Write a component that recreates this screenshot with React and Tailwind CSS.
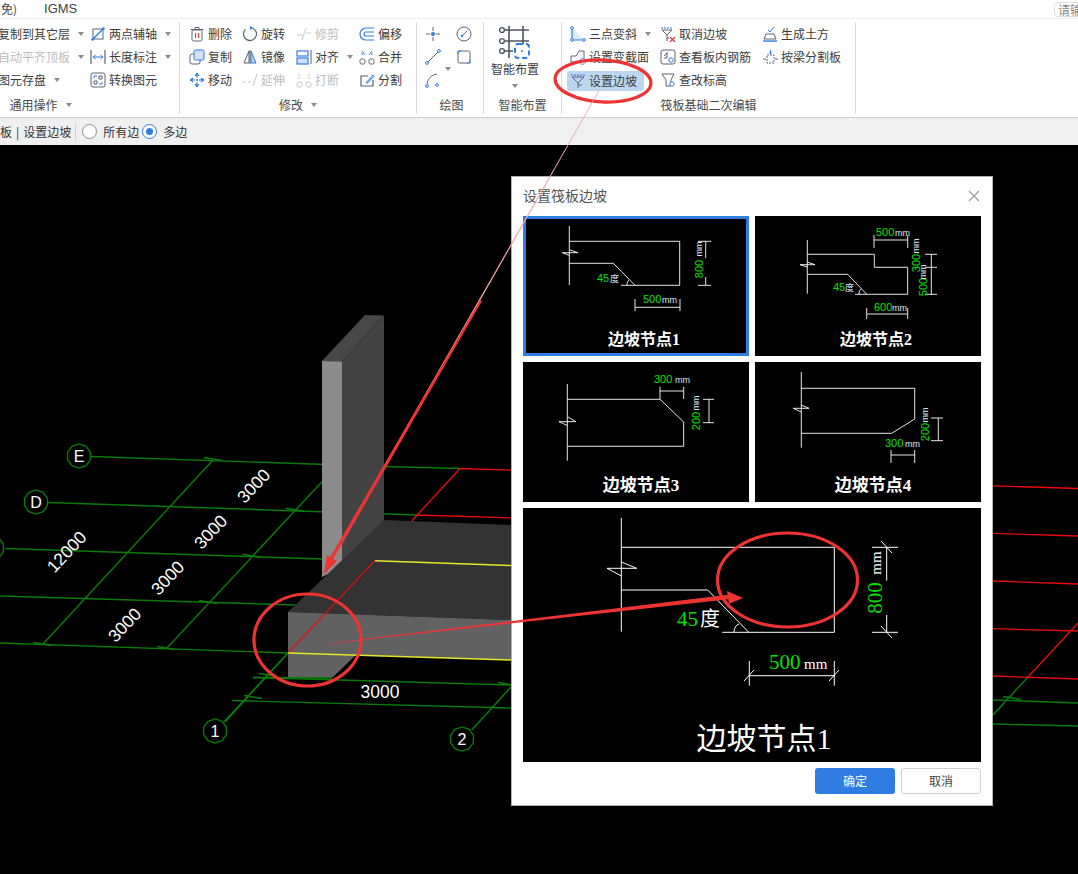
const BLUE = "#2f7de1";
const DARK = "#5a6372";
const OFF = "#c4c4c4";
const GREEN = "#087c08";

// ribbon icons, all in a 16x16 box
const icons = {
  axis: <><rect x="3" y="3" width="10" height="10" fill="none" stroke={DARK} /><path d="M2 14L14 2" stroke={BLUE} strokeWidth="1.4" /><circle cx="2.5" cy="13.5" r="1.2" fill={BLUE} /><circle cx="13.5" cy="2.5" r="1.2" fill={BLUE} /></>,
  length: <><path d="M1 1V15M15 1V15" stroke={DARK} strokeWidth="1.2" /><path d="M3 8H13M3 8l2.5-2M3 8l2.5 2M13 8l-2.5-2M13 8l-2.5 2" stroke={BLUE} fill="none" /></>,
  convert: <><rect x="1" y="1" width="14" height="14" rx="2" fill="none" stroke={DARK} /><path d="M4 6V4h3M12 10v2H9" fill="none" stroke={BLUE} /><path d="M9 4h3v3H9zM4 9h3v3H4z" fill="none" stroke={DARK} /></>,
  trash: <><rect x="3" y="4" width="10" height="11" rx="1.5" fill="none" stroke={DARK} /><path d="M1.5 3.5H14.5M6 3.5V1.5H10V3.5" fill="none" stroke={DARK} /><path d="M6.5 7V12M9.5 7V12" stroke="#e23b3b" strokeWidth="1.2" /></>,
  rotate: <><path d="M8 1.5A6.5 6.5 0 1 1 3.4 3.4" fill="none" stroke={DARK} strokeWidth="1.2" /><path d="M8 0L11 2L8 4Z" fill={BLUE} /></>,
  trim: <path d="M1 9H6M10 7H15M10 2L6 14" stroke={OFF} fill="none" />,
  offset: <path d="M15 2H7A6 6 0 0 0 7 14H15M15 6H7A2 2 0 0 0 7 10H15" fill="none" stroke={BLUE} strokeWidth="1.2" />,
  copy: <><rect x="1" y="5" width="10" height="10" rx="2" fill="#fff" stroke={DARK} /><rect x="5" y="1" width="10" height="10" rx="1.5" fill="#cfe0f7" stroke={BLUE} /></>,
  mirror: <><path d="M7 2L2 14H7Z" fill="none" stroke={DARK} /><path d="M9 2L14 14H9Z" fill="#b8d2f3" stroke={BLUE} /><path d="M8 1V15" stroke={DARK} /></>,
  align: <><rect x="1" y="2" width="11" height="5" fill="none" stroke={BLUE} strokeWidth="1.2" /><rect x="1" y="9" width="11" height="6" fill="#cfe0f7" stroke={BLUE} strokeWidth="1.2" /><path d="M15 1V15" stroke={DARK} /></>,
  merge: <><rect x="1" y="10" width="5" height="5" rx="1.5" fill="none" stroke={DARK} /><rect x="10" y="10" width="5" height="5" rx="1.5" fill="none" stroke={DARK} /><path d="M3 2L6 6M3 6V4M13 2L10 6M13 6V4" stroke={BLUE} fill="none" /></>,
  move: <path d="M8 1V15M1 8H15M8 1L6 3.5H10ZM8 15L6 12.5H10ZM1 8L3.5 6V10ZM15 8L12.5 6V10Z" fill={BLUE} stroke={BLUE} strokeDasharray="2 1" />,
  extend: <path d="M1 10H4M6 10H9M15 2L11 14" stroke={OFF} fill="none" />,
  broken: <><rect x="1" y="10" width="5" height="5" rx="1.5" fill="none" stroke={OFF} /><rect x="10" y="10" width="5" height="5" rx="1.5" fill="none" stroke={OFF} /><path d="M3 2L3 7M13 2L13 7" stroke={OFF} strokeDasharray="2 1" /></>,
  split: <><path d="M9 4H2V14H14V8" fill="none" stroke={DARK} strokeWidth="1.2" /><path d="M7 11L14 3L15 4.5L8.5 11Z" fill="#cfe0f7" stroke={BLUE} /></>,
  point: <><path d="M8 1V5M8 11V15M1 8H5M11 8H15" stroke={DARK} /><circle cx="8" cy="8" r="2" fill={BLUE} /></>,
  arc2: <><circle cx="8" cy="8" r="7" fill="none" stroke={DARK} /><path d="M6 10L11 5" stroke={BLUE} /><circle cx="6" cy="10" r="1.2" fill={BLUE} /></>,
  line: <><path d="M2 14L14 2" stroke={DARK} /><circle cx="2" cy="14" r="1.4" fill="#fff" stroke={BLUE} /><circle cx="14" cy="2" r="1.4" fill="#fff" stroke={BLUE} /></>,
  square: <><rect x="2" y="2" width="12" height="12" rx="1.5" fill="none" stroke={DARK} /><path d="M2 5V2H5M14 11V14H11" fill="none" stroke={BLUE} /></>,
  curve: <><path d="M2 14C2 7 6 3 12 2" fill="none" stroke={DARK} /><circle cx="2" cy="14" r="1.4" fill="#fff" stroke={BLUE} /><circle cx="12" cy="13" r="1.4" fill="#fff" stroke={BLUE} /></>,
  threePoint: <><path d="M2 2V14H14Z" fill="#dce9f8" stroke="none" /><path d="M2 2V14H14" fill="none" stroke={BLUE} strokeWidth="1.2" /><circle cx="2" cy="2" r="1.4" fill="#fff" stroke={BLUE} /><circle cx="2" cy="14" r="1.4" fill="#fff" stroke={BLUE} /><circle cx="14" cy="14" r="1.4" fill="#fff" stroke={BLUE} /></>,
  section: <><path d="M1 13V7L6 7L9 2H14V11" fill="none" stroke={DARK} /><path d="M1 13H9" stroke={DARK} /><circle cx="12.5" cy="12.5" r="3" fill="#cfe0f7" stroke={BLUE} strokeDasharray="1.5 1" /></>,
  slope: <><path d="M1 2H15" stroke={BLUE} strokeDasharray="2 1" /><path d="M2 4L8 10L14 4H2ZM8 10V15M8 12H12" fill="none" stroke={DARK} /></>,
  cancelSlope: <><path d="M1 2H13" stroke={BLUE} strokeDasharray="2 1" /><path d="M2 4L7 9L12 4H2ZM7 9V15M7 12H9" fill="none" stroke={DARK} /><path d="M10 11L15 16M15 11L10 16" stroke="#e23b3b" strokeWidth="1.3" /></>,
  rebar: <><rect x="1" y="1" width="14" height="14" rx="2" fill="none" stroke={DARK} /><path d="M7 3V9H4M4 7L7 4" fill="none" stroke={DARK} /><circle cx="11" cy="11" r="2.2" fill="none" stroke={BLUE} /></>,
  elevation: <><path d="M2 2H14L11 8V14H6V8Z" fill="none" stroke={DARK} /><circle cx="12" cy="12" r="2.2" fill="#fff" stroke={BLUE} /></>,
  earth: <><path d="M4 8H12L14 13H2Z" fill="none" stroke={DARK} /><path d="M1 15H15" stroke={BLUE} strokeWidth="1.4" /><path d="M6 4L8 6L12 1" fill="none" stroke={BLUE} /></>,
  beamCut: <><rect x="5" y="6" width="7" height="8" fill="none" stroke={DARK} strokeDasharray="2 1" /><path d="M1 10H4M13 10H16" stroke={DARK} /><path d="M8.5 1V5M7 3.5L8.5 5L10 3.5" fill="none" stroke={BLUE} /></>,
};

const Icon = ({ name }) => (
  <svg viewBox="0 0 16 16" className="w-4 h-4 shrink-0">{icons[name]}</svg>
);

const Caret = () => (
  <span className="ml-2 w-0 h-0 border-x-[3px] border-t-[4px] border-x-transparent border-t-[#8a8a8a]" />
);

const Tool = ({ icon, label, caret, off, active }) => (
  <div className={`flex items-center ${active ? "bg-[#bcd6f0] rounded-[3px] -ml-[3px] pl-[3px] h-[20px] mt-[3px] w-[77px]" : "h-[23px]"}`}>
    {icon && <Icon name={icon} />}
    {label && <span className={`whitespace-nowrap ${icon ? "ml-[3px]" : ""} ${off ? "text-[#bdbdbd]" : "text-[#3c3c3c]"}`}>{label}</span>}
    {caret && <Caret />}
  </div>
);

const Group = ({ label, caret, className, children }) => (
  <div className={`flex flex-col h-[92px] border-r border-[#dcdcdc] shrink-0 ${className}`}>
    <div className="h-[69px]">{children}</div>
    <div className="mt-[5px] h-[18px] flex items-center justify-center text-[#4a4a4a]">
      {label}
      {caret && <Caret />}
    </div>
  </div>
);

const Ribbon = () => (
  <div className="flex items-start h-[99px] pt-[3px] border-b border-[#d2d2d2] bg-white text-[12px] leading-none">
    <Group label={<span className="ml-[6px]">通用操作</span>} caret className="w-[284px] -ml-[104px]">
      <div className="grid grid-cols-[92px_auto] grid-rows-3 pl-[102px]">
        <Tool label="复制到其它层" caret />
        <Tool icon="axis" label="两点辅轴" caret />
        <Tool label="自动平齐顶板" caret off />
        <Tool icon="length" label="长度标注" caret />
        <Tool label="图元存盘" caret />
        <Tool icon="convert" label="转换图元" />
      </div>
    </Group>
    <Group label="修改" caret className="w-[237px]">
      <div className="grid grid-cols-[53px_54px_63px_auto] grid-rows-3 pl-[9px]">
        <Tool icon="trash" label="删除" />
        <Tool icon="rotate" label="旋转" />
        <Tool icon="trim" label="修剪" off />
        <Tool icon="offset" label="偏移" />
        <Tool icon="copy" label="复制" />
        <Tool icon="mirror" label="镜像" />
        <Tool icon="align" label="对齐" caret />
        <Tool icon="merge" label="合并" />
        <Tool icon="move" label="移动" />
        <Tool icon="extend" label="延伸" off />
        <Tool icon="broken" label="打断" off />
        <Tool icon="split" label="分割" />
      </div>
    </Group>
    <Group label={<span className="ml-[3px]">绘图</span>} className="w-[67px]">
      <div className="grid grid-cols-[31px_auto] grid-rows-3 pl-[8px]">
        <Tool icon="point" />
        <Tool icon="arc2" />
        <Tool icon="line" />
        <Tool icon="square" />
        <div className="flex items-center h-[23px]"><Icon name="curve" /><span className="-ml-1"><Caret /></span></div>
      </div>
    </Group>
    <Group label="智能布置" className="w-[78px]">
      <div className="flex flex-col items-center w-[62px]">
        <svg viewBox="0 0 32 36" className="w-8 h-9 mt-[2px] shrink-0">
          <path d="M2 6H30M2 17H30M2 27H14M10 2V34M24 2V20" stroke="#4d5563" strokeWidth="1.6" fill="none" />
          <circle cx="3" cy="6" r="2.4" fill="#fff" stroke="#4d5563" strokeWidth="1.4" />
          <circle cx="3" cy="17" r="2.4" fill="#fff" stroke="#4d5563" strokeWidth="1.4" />
          <circle cx="3" cy="27" r="2.4" fill="#fff" stroke="#4d5563" strokeWidth="1.4" />
          <rect x="16" y="20" width="14" height="14" rx="3" fill="#fff" stroke={BLUE} strokeWidth="2" strokeDasharray="5 3" />
          <circle cx="23" cy="27" r="1" fill={BLUE} />
        </svg>
        <span className="mt-[3px] whitespace-nowrap text-[#3c3c3c]">智能布置</span>
        <span className="mt-[9px] w-0 h-0 border-x-[3px] border-t-[4px] border-x-transparent border-t-[#8a8a8a]" />
      </div>
    </Group>
    <Group label="筏板基础二次编辑" className="w-[294px]">
      <div className="grid grid-cols-[90px_102px_auto] grid-rows-3 pl-[8px]">
        <Tool icon="threePoint" label="三点变斜" caret />
        <Tool icon="cancelSlope" label="取消边坡" />
        <Tool icon="earth" label="生成土方" />
        <Tool icon="section" label="设置变截面" />
        <Tool icon="rebar" label="查看板内钢筋" />
        <Tool icon="beamCut" label="按梁分割板" />
        <Tool icon="slope" label="设置边坡" active />
        <Tool icon="elevation" label="查改标高" />
      </div>
    </Group>
  </div>
);

const Radio = ({ checked }) => (
  <span className={`flex items-center justify-center w-[15px] h-[15px] rounded-full border bg-white ${checked ? "border-[#2f7de1]" : "border-[#8f8f8f]"}`}>
    {checked && <span className="w-[7px] h-[7px] rounded-full bg-[#2f7de1]" />}
  </span>
);

const OptionBar = () => (
  <div className="flex items-center h-[27px] bg-[#f0f0f0] text-[12px] text-[#333]">
    <span>板</span>
    <span className="mx-[4px]">|</span>
    <span className="whitespace-nowrap">设置边坡</span>
    <span className="ml-[4px] mr-[6px] w-px h-[18px] bg-[#cfcfcf]" />
    <Radio />
    <span className="ml-[6px] mr-[3px]">所有边</span>
    <Radio checked />
    <span className="ml-[6px]">多边</span>
  </div>
);

// axis bubble: small many-sided outline with a white letter
const Bubble = ({ x, y, label }) => {
  const pts = Array.from({ length: 10 }, (_, i) => {
    const a = (i * Math.PI) / 5 + Math.PI / 10;
    return `${x + 12 * Math.cos(a)},${y + 12 * Math.sin(a)}`;
  }).join(" ");
  return (
    <g>
      <polygon points={pts} fill="#000" stroke={GREEN} strokeWidth="1.3" />
      <text x={x} y={y + 6} textAnchor="middle" className="fill-white font-['Liberation_Sans',sans-serif] text-[16px]">{label}</text>
    </g>
  );
};

const DimText = ({ x, y, rot, children }) => (
  <text x={x} y={y} textAnchor="middle" transform={`rotate(${rot} ${x} ${y})`} className="fill-white font-['Liberation_Sans',sans-serif] text-[17.5px]">{children}</text>
);

const gridGreen = "M91 456.5L384 466.5L460 468.5M48 502.5L417 515M5 548.5L322 559M0 596L295 605M0 643L288 653M253 677.5L511 685M232 700.5L511 708M43 644L213 460M166 649L322 481.7M225 722L288 653M471.7 730L511 687M993 700L1078 703M993 724L1078 726M993 715L1028 677";
const ticks = [[213, 460], [295, 510.7], [251.7, 556.7], [208, 603], [165.7, 649], [42.3, 645], [268, 676], [253, 698], [506.7, 685], [1012, 699]];

const Scene = () => (
  <svg viewBox="0 145 1078 729" className="absolute inset-0 w-full h-full">
    <path d={gridGreen} stroke={GREEN} strokeWidth="1.4" fill="none" />
    {ticks.map(([x, y]) => (
      <path key={`${x}-${y}`} d={`M${x - 9} ${y - 2.5}L${x + 9} ${y + 0.5}`} stroke={GREEN} strokeWidth="1.4" />
    ))}
    <path d="M460 468.5L1078 488.5M417 515L1078 536M993 581L1078 584M993 628.7L1078 631M993 676L1078 679M460 468.5L411.7 521M1028 677L1078 623" stroke="#e80b0b" strokeWidth="1.3" fill="none" />
    <polygon points="322,361 365,315 384,315.5 342,361.5" fill="#484848" />
    <polygon points="342,361.5 384,315.5 384,520 342,567" fill="#434343" />
    <polygon points="322,361 342,361.5 342,567 322,577" fill="#8b8b8b" />
    <polygon points="288,612 384,520 511,525 511,620" fill="#333" />
    <polygon points="288,612 511,620 511,660 288,653" fill="#616161" />
    <polygon points="288,653 356,655 332,678 288,677" fill="#616161" />
    <path d="M288 653L375 560.7" stroke="#e80b0b" strokeWidth="1.2" />
    <path d="M375 560.7L511 565.5M288 653L511 660" stroke="#e6e62a" strokeWidth="1.4" />
    <path d="M288 653L224 721.7M253 677.5L332 678" stroke={GREEN} strokeWidth="1.3" />
    <Bubble x={79} y={456} label="E" />
    <Bubble x={36} y={502} label="D" />
    <Bubble x={-8} y={548} label="C" />
    <Bubble x={215} y={731} label="1" />
    <Bubble x={462} y={739} label="2" />
    <DimText x={258} y={490} rot={-47}>3000</DimText>
    <DimText x={215} y={536} rot={-47}>3000</DimText>
    <DimText x={172} y={582} rot={-47}>3000</DimText>
    <DimText x={129} y={629} rot={-47}>3000</DimText>
    <DimText x={71} y={556} rot={-47}>12000</DimText>
    <DimText x={380} y={698} rot={0}>3000</DimText>
  </svg>
);

// dialog thumbnails, drawn in card pixels
const Num = ({ x, y, rot, big, children }) => (
  <text x={x} y={y} transform={rot ? `rotate(${rot} ${x} ${y})` : undefined} textAnchor={rot ? "middle" : "start"} className={big ? "fill-[#00e000] font-['Liberation_Serif',serif] text-[21px]" : "fill-[#00e000] font-['Liberation_Sans',sans-serif] text-[11px]"}>{children}</text>
);
const Unit = ({ x, y, rot, big, children }) => (
  <text x={x} y={y} transform={rot ? `rotate(${rot} ${x} ${y})` : undefined} textAnchor={rot ? "middle" : "start"} className={big ? "fill-white font-['Liberation_Serif',serif] text-[15px]" : "fill-[#dbe8f5] font-['Liberation_Sans','Noto_Sans_CJK_SC',sans-serif] text-[9px]"}>{children}</text>
);

const Thumb = ({ selected, caption, wide, lines, children }) => (
  <div className={`relative h-[140px] bg-black ${selected ? "border-[3px] border-[#2f7de1]" : ""}`}>
    <svg viewBox="0 0 226 140" className={`absolute w-[226px] h-[140px] ${selected ? "-top-[3px] -left-[3px]" : "top-0 left-0"}`}>
      <path d={lines} stroke="#fff" fill="none" strokeWidth="0.9" />
      {children}
      <text x={wide ? 118 : 121} y="129" textAnchor="middle" className={`fill-white font-bold font-['Liberation_Serif','Noto_Sans_CJK_SC',serif] ${wide ? "text-[17px]" : "text-[16px]"}`}>{caption}</text>
    </svg>
  </div>
);

const Dialog = () => (
  <div className="absolute left-[511px] top-[31px] w-[482px] h-[630px] bg-white border border-[#b0b0b0] px-[11px] flex flex-col">
    <div className="flex items-center justify-between h-[37px] mb-[2px] shrink-0 text-[14px] text-[#555]">
      <span>设置筏板边坡</span>
      <svg viewBox="0 0 12 12" className="w-3 h-3 mr-[1px]"><path d="M1 1L11 11M11 1L1 11" stroke="#9a9a9a" strokeWidth="1.1" /></svg>
    </div>
    <div className="grid grid-cols-[226px_226px] gap-[6px]">
      <Thumb selected caption="边坡节点1" lines="M46.3 10V69M46.3 25.3H156.7V69.3H98M46.3 47.3H90.3L112 69.3M39.3 36.7H55L47 34M39.3 36.7L46.3 39.3M182.7 25.3V42M182.7 61V69.3M175 25.3H188M175 69.3H188M112 91.3H157M112 83V95M157 83V95M104 69.3C104 66 105 65 106 64">
        <Num x={74} y={66}>45</Num><Unit x={87} y={66}>度</Unit>
        <Num x={180} y={53} rot={-90}>800</Num><Unit x={179} y={33} rot={-90}>mm</Unit>
        <Num x={120} y={87}>500</Num><Unit x={139} y={87}>mm</Unit>
      </Thumb>
      <Thumb caption="边坡节点2" lines="M52.3 24V77.7M52.3 38.3H119.3V51.3H152.7V78.3H100M52.3 58.3H92.7L111.7 78.3M45 48.7H60L52 46M45 48.7L52.3 51M176.3 38.3V78.3M170 38.3H182M170 51.3H182M170 78.3H182M119 24H152.7M119 19V32M152.7 19V32M111.7 98H152.7M111.7 92V103M152.7 92V103M104 78.3C104 75 105 74 106 73">
        <Num x={78} y={75}>45</Num><Unit x={90} y={75}>度</Unit>
        <Num x={121} y={20}>500</Num><Unit x={140} y={20}>mm</Unit>
        <Num x={165} y={47} rot={-90}>300</Num><Unit x={164} y={30} rot={-90}>mm</Unit>
        <Num x={172} y={71} rot={-90}>500</Num><Unit x={171} y={56} rot={-90}>mm</Unit>
        <Num x={119} y={95}>600</Num><Unit x={137} y={95}>mm</Unit>
      </Thumb>
      <Thumb wide caption="边坡节点3" lines="M44.3 22V98.7M44.3 37.3H137L160.7 60V84.3H44.3M36 59.7H53L45 55M36 59.7L44.3 63.5M137 29H160.7M137 24.7V37M160.7 24.7V37M186 37.3V60.7M180 37.3H191M180 60.7H191">
        <Num x={131} y={21}>300</Num><Unit x={152} y={21}>mm</Unit>
        <Num x={177} y={59} rot={-90}>200</Num><Unit x={176} y={41} rot={-90}>mm</Unit>
      </Thumb>
      <Thumb wide caption="边坡节点4" lines="M46.3 10V85.7M46.3 26.3H159.7V57M46.3 71.3H136.7L159.7 57M38.3 46.3H54L46 43M38.3 46.3L46.3 50M183.3 56V78.7M176 56H188M176 78.7H188M136 93H159.7M136 88V101M159.7 88V101">
        <Num x={130} y={85}>300</Num><Unit x={150} y={85}>mm</Unit>
        <Num x={174} y={70} rot={-90}>200</Num><Unit x={173} y={53} rot={-90}>mm</Unit>
      </Thumb>
    </div>
    <div className="relative h-[254px] mt-[6px] bg-black shrink-0">
      <svg viewBox="0 0 458 254" className="absolute inset-0 w-full h-full">
        <path d="M98.3 10V123.7M98.3 39.3H311.3V124.3H199.3M98.3 82H184.7L225.7 124.3M84 60.3H113.7L99 54.3M84 60.3L98.3 68M363.7 39.3V72.7M363.7 107V124.3M349 39.3H375M349 124.3H375M226.3 167.7H311.3M226.3 153V177.7M311.3 153V177.7M358 33L369 45M358 118L369 130M221 173L231 162M306 173L316 162M211 124C211 120 213 117 216 116" stroke="#fff" fill="none" strokeWidth="1" />
        <Num big x={154} y={118}>45</Num>
        <text x="177" y="118" className="fill-white font-['Noto_Sans_CJK_SC',sans-serif] text-[20px]">度</text>
        <Num big x={359} y={90} rot={-90}>800</Num>
        <Unit big x={358} y={55} rot={-90}>mm</Unit>
        <Num big x={246} y={161}>500</Num>
        <Unit big x={281} y={161}>mm</Unit>
        <text x="241" y="241" textAnchor="middle" className="fill-white font-['Liberation_Serif','Noto_Sans_CJK_SC',serif] text-[30px]">边坡节点1</text>
      </svg>
    </div>
    <div className="flex justify-end gap-[6px] mt-[6px] text-[12px]">
      <button className="w-20 h-[26px] rounded-[3px] bg-[#2f7de1] text-white">确定</button>
      <button className="w-20 h-[26px] rounded-[3px] border border-[#d0d0d0] bg-white text-[#444]">取消</button>
    </div>
  </div>
);

// hand-drawn red marks lying over the whole shot
const Annotations = () => (
  <svg viewBox="0 0 1078 874" className="absolute inset-0 w-full h-full pointer-events-none">
    <ellipse cx="603" cy="81" rx="48" ry="21" fill="none" stroke="#ee3333" strokeWidth="3.2" transform="rotate(3 603 81)" />
    <ellipse cx="307.5" cy="640" rx="53.5" ry="46" fill="none" stroke="#ee3333" strokeWidth="3.2" />
    <ellipse cx="787.5" cy="580" rx="70" ry="47" fill="none" stroke="#ee3333" strokeWidth="3.2" />
    <polygon points="599,90 599.5,90.5 331,563 329,562" fill="#f4a3a3" />
    <polygon points="480,300 482,301 331,563 328,561" fill="#ee3333" />
    <polygon points="324,574 327,555 337,561" fill="#ee3333" />
    <polygon points="326.7,644 326.7,643.6 730,594.5 731,599" fill="#ee3333" />
    <polygon points="743,598 727,591 729,604" fill="#ee3333" />
  </svg>
);

export default function App() {
  return (
    <div className="relative w-[1078px] h-[874px] overflow-hidden flex flex-col bg-black font-['Noto_Sans_CJK_SC','Liberation_Sans',sans-serif]">
      <div className="relative flex items-center h-[19px] shrink-0 bg-white border-b border-[#efefef] text-[12px] text-[#444]">
        <span className="ml-px">免)</span>
        <span className="ml-[27px] text-[13px] font-['Liberation_Sans',sans-serif]">IGMS</span>
        <span className="absolute left-[1054px] top-[2px] h-[15px] w-[30px] pl-[3px] border border-[#ddd] rounded-sm text-[#888] leading-[14px] whitespace-nowrap overflow-hidden">请输</span>
      </div>
      <Ribbon />
      <OptionBar />
      <div className="relative flex-1">
        <Scene />
        <Dialog />
      </div>
      <Annotations />
    </div>
  );
}
